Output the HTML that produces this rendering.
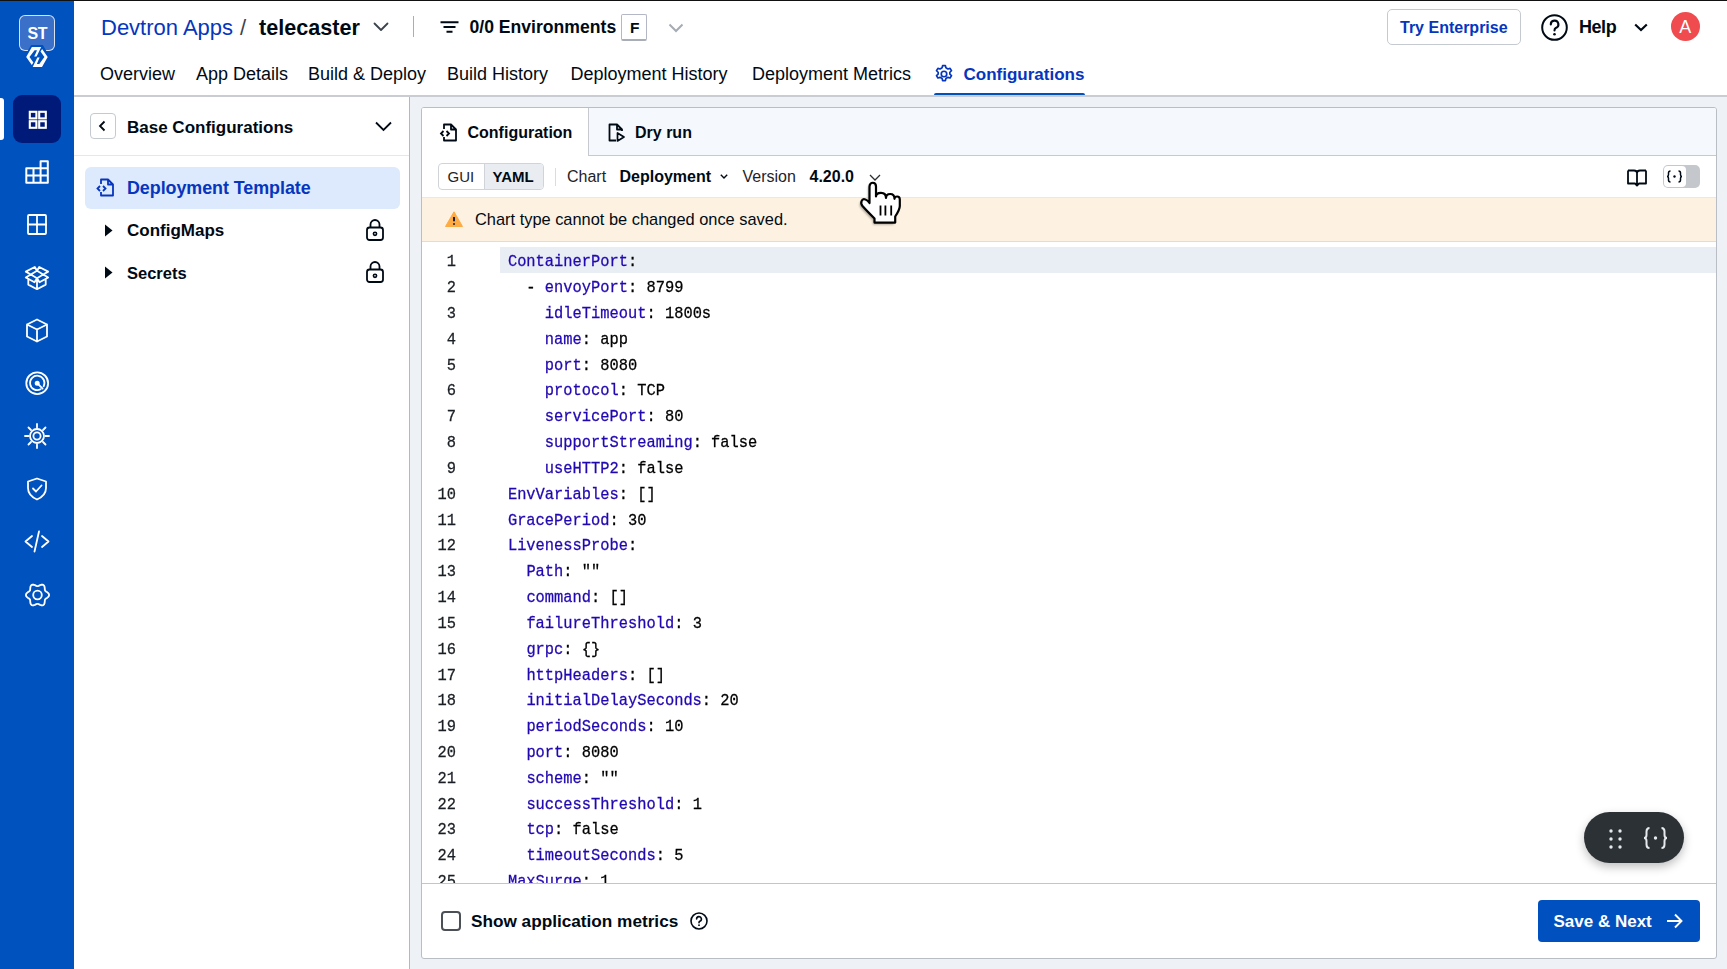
<!DOCTYPE html>
<html><head><meta charset="utf-8">
<style>
*{box-sizing:border-box;margin:0;padding:0}
html,body{width:1727px;height:969px;overflow:hidden;background:#fff;font-family:"Liberation Sans",sans-serif;color:#000a14}
.abs{position:absolute}
.t{position:absolute;white-space:nowrap;line-height:1}
svg{position:absolute;overflow:visible}
.ni{fill:none;stroke:#fff;stroke-width:1.8;stroke-linecap:round;stroke-linejoin:round}
.ic{fill:none;stroke:#000a14;stroke-width:1.6;stroke-linecap:round;stroke-linejoin:round}
.code{position:absolute;font-family:"Liberation Mono",monospace;white-space:pre;color:#000;-webkit-text-stroke:0.25px currentColor}
.k{color:#2108b0}
</style></head><body>
<div class="abs" style="left:0;top:0;width:1727px;height:1px;background:#111"></div>
<div class="abs" style="left:0;top:1px;width:74px;height:968px;background:#0052bf"></div>
<div class="abs" style="left:19px;top:15px;width:36px;height:36px;border:1.5px solid rgba(255,255,255,.8);border-radius:6px;background:#3a70c8"></div>
<div class="t" style="left:27.5px;top:26.46px;font-size:16px;font-weight:bold;letter-spacing:-0.5px;color:#fff;">ST</div>
<svg style="left:25px;top:46px" width="24" height="22" viewBox="0 0 24 22"><path d="M6.5 -0.5 H17.5 L24.2 11 L17.5 22.5 H6.5 L-0.2 11 Z" fill="#0052bf" stroke="#0052bf" stroke-width="1.2" stroke-linejoin="round"/><path d="M6.90 1.10 L16.20 1.10 L11.60 10.60 L9.20 10.60 L10.40 8.00 L12.00 4.20 L9.60 4.20 L4.50 11.00 L8.40 16.60 L6.80 19.00 L1.20 11.00Z M17.00 21.00 L7.70 21.00 L12.30 11.50 L14.70 11.50 L13.50 14.10 L11.90 17.90 L14.30 17.90 L19.40 11.10 L15.50 5.50 L17.10 3.10 L22.70 11.10Z" fill="#fff"/></svg>
<div class="abs" style="left:0;top:98px;width:4px;height:42px;background:#fff;border-radius:0 3px 3px 0"></div>
<div class="abs" style="left:13px;top:95px;width:48px;height:48px;background:#001a7a;border-radius:9px"></div>
<svg style="left:27.8px;top:109.6px" width="20" height="20" viewBox="0 0 20 20" class="ni" ><g style="stroke-width:2.1;stroke-linejoin:miter"><rect x="1.8" y="1.8" width="6.6" height="6.6"/><rect x="11.2" y="1.8" width="6.6" height="6.6"/><rect x="1.8" y="11.2" width="6.6" height="6.6"/><rect x="11.2" y="11.2" width="6.6" height="6.6"/></g></svg>
<svg style="left:25px;top:160px" width="24" height="24" viewBox="0 0 24 24" class="ni" ><g style="stroke-width:2"><path d="M1.3 22.8 V8.2 H15.6 V1.3 H22.8 V22.8 Z M1.3 15.5 H22.8 M15.6 8.2 H22.8 M8.5 8.2 V22.8 M15.6 8.2 V22.8"/></g></svg>
<svg style="left:27px;top:214px" width="20" height="21" viewBox="0 0 20 21" class="ni"><rect x="1" y="1" width="18" height="19" rx="1"/><path d="M10 1 V20 M1 10.5 H19"/></svg>
<svg style="left:25px;top:266px" width="24" height="24" viewBox="0 0 24 24" class="ni"><path d="M12 4.8 L18.2 8.5 L12 12.3 L5.8 8.5 Z M5.8 8.5 L0.8 5.6 L9.8 1 L12 4.8 L14.2 1 L23.2 5.6 L18.2 8.5 M5.8 8.5 L0.8 11.5 L9.5 16.3 L12 12.3 L14.5 16.3 L23.2 11.5 L18.2 8.5 M3.3 13 V18.6 L12 23.2 L20.7 18.6 V13 M12 14.5 V23.2"/></svg>
<svg style="left:25px;top:318px" width="24" height="25" viewBox="0 0 24 25" class="ni"><path d="M12 1.5 L22 6.5 V18.5 L12 23.5 L2 18.5 V6.5 Z M2 6.5 L12 11.5 L22 6.5 M12 11.5 V23.5"/></svg>
<svg style="left:25px;top:371px" width="24" height="24" viewBox="0 0 24 24" class="ni"><circle cx="12.2" cy="12.2" r="10.9"/><path d="M15.6 18.3 A7.2 7.2 0 1 1 18.6 15.3"/><circle cx="12.2" cy="12.2" r="1.6" fill="#fff"/><path d="M12.2 12.2 L17.6 17.6"/></svg>
<svg style="left:24px;top:423px" width="26" height="26" viewBox="0 0 26 26" class="ni"><circle cx="13" cy="13" r="7"/><circle cx="13" cy="13" r="3.6"/><path d="M13 1 V4.5 M13 21.5 V25 M1 13 H4.5 M21.5 13 H25 M4.5 4.5 L7 7 M19 19 L21.5 21.5 M21.5 4.5 L19 7 M7 19 L4.5 21.5"/></svg>
<svg style="left:26px;top:477px" width="22" height="24" viewBox="0 0 22 24" class="ni"><path d="M11 1.5 L20 4.5 V11 C20 17 15.5 20.5 11 22.5 C6.5 20.5 2 17 2 11 V4.5 Z M7 11.5 L10 14.5 L15.5 8.5"/></svg>
<svg style="left:24px;top:530px" width="26" height="23" viewBox="0 0 26 23" class="ni"><path d="M8 6 L1.5 11.5 L8 17 M18 6 L24.5 11.5 L18 17 M15 1.5 L10.5 21.5"/></svg>
<svg style="left:25px;top:583px" width="25" height="24" viewBox="0 0 25 24" class="ni"><circle cx="12.5" cy="12" r="4.3"/><path d="M24.10 12.00 L23.87 12.99 L23.23 13.89 L22.35 14.64 L21.43 15.25 L20.65 15.80 L20.12 16.40 L19.86 17.16 L19.78 18.11 L19.71 19.21 L19.51 20.35 L19.05 21.35 L18.30 22.05 L17.32 22.34 L16.23 22.24 L15.14 21.85 L14.15 21.36 L13.28 20.95 L12.50 20.80 L11.72 20.95 L10.85 21.36 L9.86 21.85 L8.77 22.24 L7.68 22.34 L6.70 22.05 L5.95 21.35 L5.49 20.35 L5.29 19.21 L5.22 18.11 L5.14 17.16 L4.88 16.40 L4.35 15.80 L3.57 15.25 L2.65 14.64 L1.77 13.89 L1.13 12.99 L0.90 12.00 L1.13 11.01 L1.77 10.11 L2.65 9.36 L3.57 8.75 L4.35 8.20 L4.88 7.60 L5.14 6.84 L5.22 5.89 L5.29 4.79 L5.49 3.65 L5.95 2.65 L6.70 1.95 L7.68 1.66 L8.77 1.76 L9.86 2.15 L10.85 2.64 L11.72 3.05 L12.50 3.20 L13.28 3.05 L14.15 2.64 L15.14 2.15 L16.23 1.76 L17.32 1.66 L18.30 1.95 L19.05 2.65 L19.51 3.65 L19.71 4.79 L19.78 5.89 L19.86 6.84 L20.12 7.60 L20.65 8.20 L21.43 8.75 L22.35 9.36 L23.23 10.11 L23.87 11.01 L24.10 12.00Z"/></svg>
<div class="abs" style="left:74px;top:1px;width:1653px;height:95px;background:#fff;border-bottom:1px solid #d3d6db"></div>
<div class="t" style="left:101.0px;top:16.98px;font-size:22px;color:#0636bd;">Devtron Apps</div>
<div class="t" style="left:240.0px;top:16.98px;font-size:22px;color:#3b444c;">/</div>
<div class="t" style="left:259.0px;top:17.32px;font-size:21.6px;font-weight:bold;color:#000a14;">telecaster</div>
<svg style="left:373px;top:22px" width="16" height="10" viewBox="0 0 16 10" class="ic" ><path d="M1.5 1.5 L8 8 L14.5 1.5" style="stroke:#3b444c;stroke-width:1.8"/></svg>
<div class="abs" style="left:413px;top:16px;width:1px;height:21px;background:#a9acbf"></div>
<svg style="left:440px;top:21px" width="19" height="12" viewBox="0 0 19 12"><path d="M0.5 1.2 H18.5 M3.5 6 H15.5 M6.5 10.8 H12.5" stroke="#000a14" stroke-width="2" fill="none"/></svg>
<div class="t" style="left:469.5px;top:18.80px;font-size:17.6px;font-weight:bold;color:#000a14;">0/0 Environments</div>
<div class="abs" style="left:621px;top:14px;width:26px;height:27px;border:1px solid #b4b7c6;border-bottom:2px solid #a9adb5;border-radius:2px;background:#fff"></div>
<div class="t" style="left:630.0px;top:19.88px;font-size:15.5px;font-weight:bold;color:#000a14;">F</div>
<svg style="left:668px;top:23px" width="16" height="10" viewBox="0 0 16 10"><path d="M1.5 1.5 L8 8 L14.5 1.5" stroke="#a6acb3" stroke-width="2" fill="none"/></svg>
<div class="abs" style="left:1387px;top:9px;width:134px;height:36px;border:1px solid #c5cad0;border-radius:5px;background:#fff"></div>
<div class="t" style="left:1400.0px;top:20.46px;font-size:16px;font-weight:bold;color:#0636bd;">Try Enterprise</div>
<svg style="left:1541px;top:14px" width="27" height="27" viewBox="0 0 27 27"><circle cx="13.5" cy="13.5" r="12.3" stroke="#000a14" stroke-width="2" fill="none"/><path d="M9.8 10.5 A3.8 3.8 0 1 1 14.8 14 C13.8 14.5 13.5 15.2 13.5 16.5" stroke="#000a14" stroke-width="2.1" fill="none" stroke-linecap="round"/><circle cx="13.5" cy="20.2" r="1.3" fill="#000a14"/></svg>
<div class="t" style="left:1579.0px;top:18.36px;font-size:18px;font-weight:bold;letter-spacing:-0.45px;color:#000a14;">Help</div>
<svg style="left:1634px;top:23px" width="14" height="9" viewBox="0 0 14 9"><path d="M1.2 1.5 L7 7 L12.8 1.5" stroke="#000a14" stroke-width="2.2" fill="none"/></svg>
<div class="abs" style="left:1671px;top:12px;width:29px;height:29px;border-radius:50%;background:#f04b4e"></div>
<div class="t" style="left:1679.3px;top:18.36px;font-size:18px;color:#fff;">A</div>
<div class="t" style="left:100.0px;top:64.76px;font-size:18px;color:#000a14;">Overview</div>
<div class="t" style="left:196.0px;top:64.76px;font-size:18px;color:#000a14;">App Details</div>
<div class="t" style="left:308.0px;top:64.76px;font-size:18px;color:#000a14;">Build &amp; Deploy</div>
<div class="t" style="left:447.0px;top:64.76px;font-size:18px;color:#000a14;">Build History</div>
<div class="t" style="left:570.5px;top:64.76px;font-size:18px;color:#000a14;">Deployment History</div>
<div class="t" style="left:752.0px;top:64.76px;font-size:18px;color:#000a14;">Deployment Metrics</div>
<svg style="left:933.5px;top:63.5px" width="20" height="20" viewBox="0 0 24 24"><circle cx="12" cy="12" r="3.3" stroke="#0636bd" stroke-width="2" fill="none"/><path d="M10.3 2 h3.4 l0.6 2.6 l2.4 1.4 l2.6 -0.8 l1.7 2.9 l-2 1.8 v2.2 l2 1.8 l-1.7 2.9 l-2.6 -0.8 l-2.4 1.4 l-0.6 2.6 h-3.4 l-0.6 -2.6 l-2.4 -1.4 l-2.6 0.8 l-1.7 -2.9 l2 -1.8 v-2.2 l-2 -1.8 l1.7 -2.9 l2.6 0.8 l2.4 -1.4 Z" stroke="#0636bd" stroke-width="2" fill="none" stroke-linejoin="round"/></svg>
<div class="t" style="left:963.5px;top:65.61px;font-size:17px;font-weight:bold;color:#0636bd;">Configurations</div>
<div class="abs" style="left:934px;top:93px;width:151px;height:3px;background:#0050c0;border-radius:2px 2px 0 0"></div>
<div class="abs" style="left:74px;top:96px;width:336px;height:873px;background:#fff;border-right:1px solid #b3b7bf"></div>
<div class="abs" style="left:90px;top:113px;width:26px;height:26px;border:1px solid #c5cad0;border-radius:4px"></div>
<svg style="left:98px;top:120px" width="9" height="12" viewBox="0 0 9 12"><path d="M6.5 1.5 L2 6 L6.5 10.5" stroke="#000a14" stroke-width="1.8" fill="none"/></svg>
<div class="t" style="left:127.0px;top:118.61px;font-size:17px;font-weight:bold;color:#000a14;">Base Configurations</div>
<svg style="left:375px;top:121px" width="17" height="11" viewBox="0 0 17 11"><path d="M1 1.5 L8.5 9 L16 1.5" stroke="#000a14" stroke-width="1.8" fill="none"/></svg>
<div class="abs" style="left:74px;top:155px;width:335px;height:1px;background:#e4e7eb"></div>
<div class="abs" style="left:85px;top:167px;width:315px;height:42px;background:#dde9fc;border-radius:6px"></div>
<svg style="left:96px;top:178px" width="19" height="19" viewBox="0 0 19 19"><path d="M5 6 V1.5 H12 L17 6.5 V17.5 H5 V14 M12 1.5 V6.5 H17" stroke="#0636bd" stroke-width="1.8" fill="none" stroke-linejoin="round"/><path d="M4 8 L1.5 10.5 L4 13 M7 8 L9.5 10.5 L7 13" stroke="#0636bd" stroke-width="1.8" fill="none"/></svg>
<div class="t" style="left:127.0px;top:180.45px;font-size:17.9px;font-weight:bold;letter-spacing:-0.05px;color:#0636bd;">Deployment Template</div>
<svg style="left:104px;top:224px" width="9" height="13" viewBox="0 0 9 13"><path d="M1 0.5 L8.5 6.5 L1 12.5 Z" fill="#000a14"/></svg>
<div class="t" style="left:127.0px;top:222.11px;font-size:17px;font-weight:bold;color:#000a14;">ConfigMaps</div>
<svg style="left:104px;top:266px" width="9" height="13" viewBox="0 0 9 13"><path d="M1 0.5 L8.5 6.5 L1 12.5 Z" fill="#000a14"/></svg>
<div class="t" style="left:127.0px;top:264.53px;font-size:16.5px;font-weight:bold;color:#000a14;">Secrets</div>
<svg style="left:366px;top:219px" width="18" height="22" viewBox="0 0 18 22"><rect x="1" y="8.5" width="16" height="12.5" rx="2.5" stroke="#000a14" stroke-width="1.8" fill="none"/><path d="M4.5 8.5 V5.5 A4.5 4.5 0 0 1 13.5 5.5 V8.5" stroke="#000a14" stroke-width="1.8" fill="none"/><circle cx="9" cy="14.8" r="1.6" stroke="#000a14" stroke-width="1.6" fill="none"/></svg>
<svg style="left:366px;top:261px" width="18" height="22" viewBox="0 0 18 22"><rect x="1" y="8.5" width="16" height="12.5" rx="2.5" stroke="#000a14" stroke-width="1.8" fill="none"/><path d="M4.5 8.5 V5.5 A4.5 4.5 0 0 1 13.5 5.5 V8.5" stroke="#000a14" stroke-width="1.8" fill="none"/><circle cx="9" cy="14.8" r="1.6" stroke="#000a14" stroke-width="1.6" fill="none"/></svg>
<div class="abs" style="left:410px;top:96px;width:1317px;height:873px;background:#eef1f5"></div>
<div class="abs" style="left:74px;top:95px;width:1653px;height:2px;background:#c9cdd3"></div>
<div class="abs" style="left:421px;top:107px;width:1296px;height:852px;background:#fff;border:1px solid #b9bdc4;border-radius:3px;overflow:hidden">
<div class="abs" style="left:0;top:0;width:1294px;height:48px;background:#f5f8fc;border-bottom:1px solid #c6cad0"></div>
<div class="abs" style="left:0;top:0;width:167px;height:48px;background:#fff;border-right:1px solid #c6cad0"></div>
<svg style="left:18px;top:15px" width="18" height="19" viewBox="0 0 18 19"><path d="M4 6 V1.5 H11 L16 6.5 V17.5 H4 V14 M11 1.5 V6.5 H16" stroke="#000a14" stroke-width="1.8" fill="none" stroke-linejoin="round"/><path d="M3.5 8 L1 10.5 L3.5 13 M6.5 8 L9 10.5 L6.5 13" stroke="#000a14" stroke-width="1.8" fill="none"/></svg>
<div class="t" style="left:45.5px;top:16.96px;font-size:16px;font-weight:bold;color:#000a14;">Configuration</div>
<svg style="left:186px;top:15px" width="18" height="19" viewBox="0 0 18 19"><path d="M8 17.5 H1.5 V1.5 H9 L14 6.5 V8 M9 1.5 V6.5 H14" stroke="#000a14" stroke-width="1.8" fill="none" stroke-linejoin="round"/><path d="M9.5 10 V18 L16 14 Z" stroke="#000a14" stroke-width="1.7" fill="none" stroke-linejoin="round"/></svg>
<div class="t" style="left:213.0px;top:16.96px;font-size:16px;font-weight:bold;color:#000a14;">Dry run</div>
<div class="abs" style="left:16px;top:55px;width:106px;height:27px;border:1px solid #d0d4d9;border-radius:4px;overflow:hidden;background:#fff"><div class="abs" style="left:45px;top:0;width:60px;height:25px;background:#e9edf2;border-left:1px solid #d0d4d9"></div></div>
<div class="t" style="left:25.5px;top:61.30px;font-size:15px;color:#1f2328;">GUI</div>
<div class="t" style="left:70.5px;top:61.30px;font-size:15px;font-weight:bold;color:#000a14;">YAML</div>
<div class="abs" style="left:133px;top:60px;width:1px;height:18px;background:#d8dde3"></div>
<div class="t" style="left:145.0px;top:60.96px;font-size:16px;color:#1f2328;">Chart</div>
<div class="t" style="left:197.5px;top:60.96px;font-size:16px;font-weight:bold;color:#000a14;">Deployment</div>
<svg style="left:298px;top:66px" width="8" height="5" viewBox="0 0 8 5"><path d="M0.8 0.8 L4 4 L7.2 0.8" stroke="#000a14" stroke-width="1.4" fill="none"/></svg>
<div class="t" style="left:320.5px;top:60.96px;font-size:16px;color:#1f2328;">Version</div>
<div class="t" style="left:387.5px;top:60.96px;font-size:16px;font-weight:bold;color:#000a14;">4.20.0</div>
<svg style="left:447px;top:66px" width="12" height="7" viewBox="0 0 12 7"><path d="M1 1 L6 6 L11 1" stroke="#2b2f33" stroke-width="1.3" fill="none"/></svg>
<svg style="left:1205px;top:61px" width="20" height="18" viewBox="0 0 20 18"><path d="M1 1.5 H7 C8.8 1.5 10 2.5 10 4 V16.5 M19 1.5 H13 C11.2 1.5 10 2.5 10 4 M1 1.5 V14.5 H8 L10 16.5 L12 14.5 H19 V1.5" stroke="#000a14" stroke-width="1.8" fill="none" stroke-linejoin="round"/></svg>
<div class="abs" style="left:1241px;top:57px;width:37px;height:23px;border-radius:5px;background:#c4c8cd;overflow:hidden"><div class="abs" style="left:1px;top:1px;width:22px;height:21px;background:#fff;border-radius:4px"></div></div>
<svg style="left:1244px;top:62px" width="17" height="13" viewBox="0 0 17 13"><path d="M4.5 1 C3 1 2.5 1.8 2.5 3 V4.8 C2.5 5.8 2 6.5 1 6.5 C2 6.5 2.5 7.2 2.5 8.2 V10 C2.5 11.2 3 12 4.5 12 M12.5 1 C14 1 14.5 1.8 14.5 3 V4.8 C14.5 5.8 15 6.5 16 6.5 C15 6.5 14.5 7.2 14.5 8.2 V10 C14.5 11.2 14 12 12.5 12" stroke="#000a14" stroke-width="1.5" fill="none"/><circle cx="8.5" cy="6.5" r="1.2" fill="#000a14"/></svg>
<div class="abs" style="left:0;top:89px;width:1294px;height:45px;background:#fdf1e1;border-top:1px solid #e3e9f1;border-bottom:1px solid #fbd8a6"></div>
<svg style="left:23px;top:103px" width="18" height="16" viewBox="0 0 18 16"><path d="M9 0.8 L17.5 15.5 H0.5 Z" fill="#fdab45" stroke="#fdab45" stroke-width="1" stroke-linejoin="round"/><path d="M9 6 V10.2" stroke="#0b1a33" stroke-width="1.9"/><path d="M9 12.3 V13.8" stroke="#0b1a33" stroke-width="1.9"/></svg>
<div class="t" style="left:53.0px;top:103.12px;font-size:16.4px;color:#000a14;">Chart type cannot be changed once saved.</div>
<div class="abs" style="left:78px;top:139px;width:1300px;height:26px;background:#e9eef5"></div>
<div class="abs" style="left:0;top:134px;width:1294px;height:642px;overflow:hidden">
<div class="code" style="left:-42px;top:7px;width:76px;text-align:right;font-size:15.4px;line-height:26px;height:26px;transform:scaleY(1.1);transform-origin:0 18px;color:#1a1f24">1</div>
<div class="code" style="left:85.90px;top:7px;font-size:15.4px;line-height:26px;height:26px;transform:scaleY(1.1);transform-origin:0 18px"><span class="k">ContainerPort</span>:</div>
<div class="code" style="left:-42px;top:33px;width:76px;text-align:right;font-size:15.4px;line-height:26px;height:26px;transform:scaleY(1.1);transform-origin:0 18px;color:#1a1f24">2</div>
<div class="code" style="left:85.90px;top:33px;font-size:15.4px;line-height:26px;height:26px;transform:scaleY(1.1);transform-origin:0 18px">  - <span class="k">envoyPort</span>: 8799</div>
<div class="code" style="left:-42px;top:59px;width:76px;text-align:right;font-size:15.4px;line-height:26px;height:26px;transform:scaleY(1.1);transform-origin:0 18px;color:#1a1f24">3</div>
<div class="code" style="left:85.90px;top:59px;font-size:15.4px;line-height:26px;height:26px;transform:scaleY(1.1);transform-origin:0 18px">    <span class="k">idleTimeout</span>: 1800s</div>
<div class="code" style="left:-42px;top:85px;width:76px;text-align:right;font-size:15.4px;line-height:26px;height:26px;transform:scaleY(1.1);transform-origin:0 18px;color:#1a1f24">4</div>
<div class="code" style="left:85.90px;top:85px;font-size:15.4px;line-height:26px;height:26px;transform:scaleY(1.1);transform-origin:0 18px">    <span class="k">name</span>: app</div>
<div class="code" style="left:-42px;top:111px;width:76px;text-align:right;font-size:15.4px;line-height:26px;height:26px;transform:scaleY(1.1);transform-origin:0 18px;color:#1a1f24">5</div>
<div class="code" style="left:85.90px;top:111px;font-size:15.4px;line-height:26px;height:26px;transform:scaleY(1.1);transform-origin:0 18px">    <span class="k">port</span>: 8080</div>
<div class="code" style="left:-42px;top:136px;width:76px;text-align:right;font-size:15.4px;line-height:26px;height:26px;transform:scaleY(1.1);transform-origin:0 18px;color:#1a1f24">6</div>
<div class="code" style="left:85.90px;top:136px;font-size:15.4px;line-height:26px;height:26px;transform:scaleY(1.1);transform-origin:0 18px">    <span class="k">protocol</span>: TCP</div>
<div class="code" style="left:-42px;top:162px;width:76px;text-align:right;font-size:15.4px;line-height:26px;height:26px;transform:scaleY(1.1);transform-origin:0 18px;color:#1a1f24">7</div>
<div class="code" style="left:85.90px;top:162px;font-size:15.4px;line-height:26px;height:26px;transform:scaleY(1.1);transform-origin:0 18px">    <span class="k">servicePort</span>: 80</div>
<div class="code" style="left:-42px;top:188px;width:76px;text-align:right;font-size:15.4px;line-height:26px;height:26px;transform:scaleY(1.1);transform-origin:0 18px;color:#1a1f24">8</div>
<div class="code" style="left:85.90px;top:188px;font-size:15.4px;line-height:26px;height:26px;transform:scaleY(1.1);transform-origin:0 18px">    <span class="k">supportStreaming</span>: false</div>
<div class="code" style="left:-42px;top:214px;width:76px;text-align:right;font-size:15.4px;line-height:26px;height:26px;transform:scaleY(1.1);transform-origin:0 18px;color:#1a1f24">9</div>
<div class="code" style="left:85.90px;top:214px;font-size:15.4px;line-height:26px;height:26px;transform:scaleY(1.1);transform-origin:0 18px">    <span class="k">useHTTP2</span>: false</div>
<div class="code" style="left:-42px;top:240px;width:76px;text-align:right;font-size:15.4px;line-height:26px;height:26px;transform:scaleY(1.1);transform-origin:0 18px;color:#1a1f24">10</div>
<div class="code" style="left:85.90px;top:240px;font-size:15.4px;line-height:26px;height:26px;transform:scaleY(1.1);transform-origin:0 18px"><span class="k">EnvVariables</span>: []</div>
<div class="code" style="left:-42px;top:266px;width:76px;text-align:right;font-size:15.4px;line-height:26px;height:26px;transform:scaleY(1.1);transform-origin:0 18px;color:#1a1f24">11</div>
<div class="code" style="left:85.90px;top:266px;font-size:15.4px;line-height:26px;height:26px;transform:scaleY(1.1);transform-origin:0 18px"><span class="k">GracePeriod</span>: 30</div>
<div class="code" style="left:-42px;top:291px;width:76px;text-align:right;font-size:15.4px;line-height:26px;height:26px;transform:scaleY(1.1);transform-origin:0 18px;color:#1a1f24">12</div>
<div class="code" style="left:85.90px;top:291px;font-size:15.4px;line-height:26px;height:26px;transform:scaleY(1.1);transform-origin:0 18px"><span class="k">LivenessProbe</span>:</div>
<div class="code" style="left:-42px;top:317px;width:76px;text-align:right;font-size:15.4px;line-height:26px;height:26px;transform:scaleY(1.1);transform-origin:0 18px;color:#1a1f24">13</div>
<div class="code" style="left:85.90px;top:317px;font-size:15.4px;line-height:26px;height:26px;transform:scaleY(1.1);transform-origin:0 18px">  <span class="k">Path</span>: &quot;&quot;</div>
<div class="code" style="left:-42px;top:343px;width:76px;text-align:right;font-size:15.4px;line-height:26px;height:26px;transform:scaleY(1.1);transform-origin:0 18px;color:#1a1f24">14</div>
<div class="code" style="left:85.90px;top:343px;font-size:15.4px;line-height:26px;height:26px;transform:scaleY(1.1);transform-origin:0 18px">  <span class="k">command</span>: []</div>
<div class="code" style="left:-42px;top:369px;width:76px;text-align:right;font-size:15.4px;line-height:26px;height:26px;transform:scaleY(1.1);transform-origin:0 18px;color:#1a1f24">15</div>
<div class="code" style="left:85.90px;top:369px;font-size:15.4px;line-height:26px;height:26px;transform:scaleY(1.1);transform-origin:0 18px">  <span class="k">failureThreshold</span>: 3</div>
<div class="code" style="left:-42px;top:395px;width:76px;text-align:right;font-size:15.4px;line-height:26px;height:26px;transform:scaleY(1.1);transform-origin:0 18px;color:#1a1f24">16</div>
<div class="code" style="left:85.90px;top:395px;font-size:15.4px;line-height:26px;height:26px;transform:scaleY(1.1);transform-origin:0 18px">  <span class="k">grpc</span>: {}</div>
<div class="code" style="left:-42px;top:421px;width:76px;text-align:right;font-size:15.4px;line-height:26px;height:26px;transform:scaleY(1.1);transform-origin:0 18px;color:#1a1f24">17</div>
<div class="code" style="left:85.90px;top:421px;font-size:15.4px;line-height:26px;height:26px;transform:scaleY(1.1);transform-origin:0 18px">  <span class="k">httpHeaders</span>: []</div>
<div class="code" style="left:-42px;top:446px;width:76px;text-align:right;font-size:15.4px;line-height:26px;height:26px;transform:scaleY(1.1);transform-origin:0 18px;color:#1a1f24">18</div>
<div class="code" style="left:85.90px;top:446px;font-size:15.4px;line-height:26px;height:26px;transform:scaleY(1.1);transform-origin:0 18px">  <span class="k">initialDelaySeconds</span>: 20</div>
<div class="code" style="left:-42px;top:472px;width:76px;text-align:right;font-size:15.4px;line-height:26px;height:26px;transform:scaleY(1.1);transform-origin:0 18px;color:#1a1f24">19</div>
<div class="code" style="left:85.90px;top:472px;font-size:15.4px;line-height:26px;height:26px;transform:scaleY(1.1);transform-origin:0 18px">  <span class="k">periodSeconds</span>: 10</div>
<div class="code" style="left:-42px;top:498px;width:76px;text-align:right;font-size:15.4px;line-height:26px;height:26px;transform:scaleY(1.1);transform-origin:0 18px;color:#1a1f24">20</div>
<div class="code" style="left:85.90px;top:498px;font-size:15.4px;line-height:26px;height:26px;transform:scaleY(1.1);transform-origin:0 18px">  <span class="k">port</span>: 8080</div>
<div class="code" style="left:-42px;top:524px;width:76px;text-align:right;font-size:15.4px;line-height:26px;height:26px;transform:scaleY(1.1);transform-origin:0 18px;color:#1a1f24">21</div>
<div class="code" style="left:85.90px;top:524px;font-size:15.4px;line-height:26px;height:26px;transform:scaleY(1.1);transform-origin:0 18px">  <span class="k">scheme</span>: &quot;&quot;</div>
<div class="code" style="left:-42px;top:550px;width:76px;text-align:right;font-size:15.4px;line-height:26px;height:26px;transform:scaleY(1.1);transform-origin:0 18px;color:#1a1f24">22</div>
<div class="code" style="left:85.90px;top:550px;font-size:15.4px;line-height:26px;height:26px;transform:scaleY(1.1);transform-origin:0 18px">  <span class="k">successThreshold</span>: 1</div>
<div class="code" style="left:-42px;top:575px;width:76px;text-align:right;font-size:15.4px;line-height:26px;height:26px;transform:scaleY(1.1);transform-origin:0 18px;color:#1a1f24">23</div>
<div class="code" style="left:85.90px;top:575px;font-size:15.4px;line-height:26px;height:26px;transform:scaleY(1.1);transform-origin:0 18px">  <span class="k">tcp</span>: false</div>
<div class="code" style="left:-42px;top:601px;width:76px;text-align:right;font-size:15.4px;line-height:26px;height:26px;transform:scaleY(1.1);transform-origin:0 18px;color:#1a1f24">24</div>
<div class="code" style="left:85.90px;top:601px;font-size:15.4px;line-height:26px;height:26px;transform:scaleY(1.1);transform-origin:0 18px">  <span class="k">timeoutSeconds</span>: 5</div>
<div class="code" style="left:-42px;top:627px;width:76px;text-align:right;font-size:15.4px;line-height:26px;height:26px;transform:scaleY(1.1);transform-origin:0 18px;color:#1a1f24">25</div>
<div class="code" style="left:85.90px;top:627px;font-size:15.4px;line-height:26px;height:26px;transform:scaleY(1.1);transform-origin:0 18px"><span class="k">MaxSurge</span>: 1</div>
</div>
<div class="abs" style="left:0;top:775px;width:1294px;height:1px;background:#c2c6cc"></div>
<div class="abs" style="left:19px;top:803px;width:20px;height:20px;border:2px solid #4b5057;border-radius:4px"></div>
<div class="t" style="left:49.0px;top:804.94px;font-size:17.2px;font-weight:bold;color:#000a14;">Show application metrics</div>
<svg style="left:268px;top:804px" width="18" height="18" viewBox="0 0 18 18"><circle cx="9" cy="9" r="8" stroke="#000a14" stroke-width="1.6" fill="none"/><path d="M6.6 7 A2.4 2.4 0 1 1 9.8 9.3 C9.2 9.6 9 10 9 10.8" stroke="#000a14" stroke-width="1.6" fill="none" stroke-linecap="round"/><circle cx="9" cy="13.2" r="0.9" fill="#000a14"/></svg>
<div class="abs" style="left:1116px;top:792px;width:162px;height:42px;background:#0050c0;border-radius:4px"></div>
<div class="t" style="left:1131.5px;top:805.11px;font-size:17px;font-weight:bold;color:#fff;">Save &amp; Next</div>
<svg style="left:1244px;top:805px" width="17" height="16" viewBox="0 0 17 16"><path d="M1 8 H15.5 M9 1.5 L15.5 8 L9 14.5" stroke="#fff" stroke-width="1.9" fill="none"/></svg>
<div class="abs" style="left:1162px;top:704px;width:100px;height:51px;background:#2c3136;border-radius:26px;box-shadow:0 4px 10px rgba(0,0,0,.25)"></div>
<svg style="left:1187px;top:721px" width="13" height="20" viewBox="0 0 13 20"><circle cx="2" cy="2" r="1.7" fill="#e6e9ed"/><circle cx="2" cy="10" r="1.7" fill="#e6e9ed"/><circle cx="2" cy="18" r="1.7" fill="#e6e9ed"/><circle cx="11" cy="2" r="1.7" fill="#e6e9ed"/><circle cx="11" cy="10" r="1.7" fill="#e6e9ed"/><circle cx="11" cy="18" r="1.7" fill="#e6e9ed"/></svg>
<svg style="left:1221px;top:719px" width="25" height="22" viewBox="0 0 25 22"><path d="M6.5 1 C4 1 3.5 2.5 3.5 4.5 V8 C3.5 9.8 2.5 11 1 11 C2.5 11 3.5 12.2 3.5 14 V17.5 C3.5 19.5 4 21 6.5 21 M18.5 1 C21 1 21.5 2.5 21.5 4.5 V8 C21.5 9.8 22.5 11 24 11 C22.5 11 21.5 12.2 21.5 14 V17.5 C21.5 19.5 21 21 18.5 21" stroke="#e6e9ed" stroke-width="2" fill="none"/><circle cx="12.5" cy="11" r="1.7" fill="#e6e9ed"/></svg>
</div>
<svg style="left:858px;top:178px" width="46" height="50" viewBox="0 0 46 50"><defs><filter id="sh" x="-30%" y="-30%" width="160%" height="160%"><feGaussianBlur stdDeviation="1.2"/></filter></defs><path transform="translate(-1.5,2)" d="M11.5 25 V8.5 C11.5 3.5 18 3.5 18 8.5 V18.5 C18 16 20 14.8 23 14.8 C26 14.8 28 16.5 28 20 C28 17.5 29.8 16 32.2 16 C34.8 16 36.5 17.8 36.5 20.8 C36.5 19.5 37.8 18.5 39.2 18.5 C40.8 18.5 41.8 19.8 41.8 21.5 V28 C41.8 31.5 39.5 35 37.2 38.5 V44.6 H16.5 V40.5 C12.5 36.5 8 32 4.5 28 C2 25 3.5 20 7.5 21.5 C9 22 10.5 23.5 11.5 25 Z" fill="rgba(0,0,0,.35)" filter="url(#sh)"/><path d="M11.5 25 V8.5 C11.5 3.5 18 3.5 18 8.5 V18.5 C18 16 20 14.8 23 14.8 C26 14.8 28 16.5 28 20 C28 17.5 29.8 16 32.2 16 C34.8 16 36.5 17.8 36.5 20.8 C36.5 19.5 37.8 18.5 39.2 18.5 C40.8 18.5 41.8 19.8 41.8 21.5 V28 C41.8 31.5 39.5 35 37.2 38.5 V44.6 H16.5 V40.5 C12.5 36.5 8 32 4.5 28 C2 25 3.5 20 7.5 21.5 C9 22 10.5 23.5 11.5 25 Z" fill="#fff" stroke="#000" stroke-width="2.2" stroke-linejoin="round"/><path d="M22.5 27.5 V37.5 M27.4 27.5 V37.5 M33.2 27.5 V37.5" stroke="#000" stroke-width="1.8"/></svg>
</body></html>
